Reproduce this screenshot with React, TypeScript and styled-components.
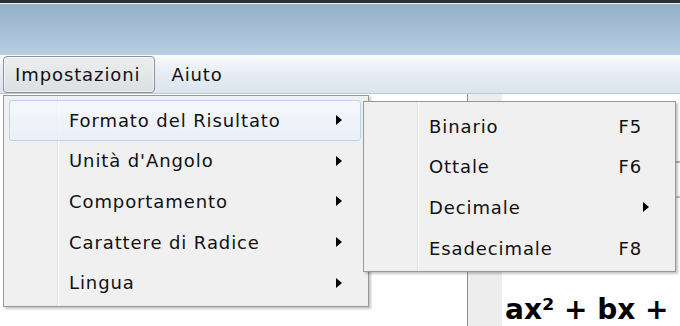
import React from 'react';
import styled, { createGlobalStyle } from 'styled-components';

const GlobalStyle = createGlobalStyle`
  html, body {
    margin: 0;
    padding: 0;
    background: #ffffff;
    overflow: hidden;
  }
`;

const Window = styled.div`
  position: relative;
  width: 680px;
  height: 326px;
  overflow: hidden;
  display: flex;
  flex-direction: column;
  font-family: 'DejaVu Sans', Tahoma, sans-serif;
  color: #111;
`;

const TopEdge = styled.div`
  height: 3px;
  background: #2c2e30;
  border-bottom: 1px solid #eef2f5;
`;

const TitleBar = styled.div`
  height: 52px;
  background: linear-gradient(to bottom, #94afc8 0%, #a6bfd7 50%, #b6cee4 100%);
`;

const MenuBar = styled.div`
  height: 40px;
  display: flex;
  align-items: flex-start;
  gap: 4px;
  padding: 1px 0 0 3px;
  box-sizing: border-box;
  background: linear-gradient(to bottom, #fdfeff 0%, #f1f5f9 18%, #e3eaf2 60%, #dbe4ee 100%);
  border-bottom: 1px solid #bcc8d5;
`;

const BarItem = styled.div<{ $open?: boolean }>`
  height: 37px;
  display: flex;
  align-items: center;
  padding: 0 14px 0 11px;
  box-sizing: border-box;
  font-size: 18px;
  letter-spacing: 0.9px;
  border: 1px solid ${(p) => (p.$open ? '#8f9296' : 'transparent')};
  border-radius: 4px;
  background: ${(p) =>
    p.$open
      ? 'linear-gradient(to bottom, #eceeef 0%, #e4e6e8 50%, #dcdfe2 100%)'
      : 'transparent'};
  box-shadow: ${(p) => (p.$open ? 'inset 0 0 0 1px rgba(255,255,255,0.55)' : 'none')};
`;

const Content = styled.div`
  flex: 1;
  display: flex;
  background: #ffffff;
`;

const Blank = styled.div`
  width: 467px;
`;

const Panel = styled.div`
  flex: 1;
  display: flex;
  border-left: 1px solid #8d8d8d;
`;

const Strip = styled.div`
  width: 34px;
  background: #ededed;
`;

const Sheet = styled.div`
  flex: 1;
  display: flex;
  flex-direction: column;
  padding-top: 67px;
  overflow: hidden;
`;

const InputBox = styled.div`
  height: 33px;
  border-top: 2px solid #b7b7b7;
  border-bottom: 2px solid #c4c4c4;
`;

const Formula = styled.div`
  margin-top: 96px;
  padding-left: 3px;
  font-weight: bold;
  font-size: 28px;
  line-height: 32px;
  white-space: nowrap;
  color: #000;
`;

const Menu = styled.div<{ $left: number; $top: number; $width: number }>`
  position: absolute;
  left: ${(p) => p.$left}px;
  top: ${(p) => p.$top}px;
  width: ${(p) => p.$width}px;
  box-sizing: border-box;
  padding: 4px 7px 3px 5px;
  border: 1px solid #979797;
  background:
    linear-gradient(
      to right,
      transparent 53px,
      #e0e1e1 53px,
      #e0e1e1 54px,
      #ffffff 54px,
      #ffffff 55px,
      transparent 55px
    ),
    #f0f0f0;
  box-shadow: 2px 2px 2px rgba(0, 0, 0, 0.22);
`;

const Item = styled.div<{ $hot?: boolean }>`
  height: 40.6px;
  display: flex;
  align-items: center;
  box-sizing: border-box;
  padding: 0 18px 0 59px;
  font-size: 18px;
  letter-spacing: 0.9px;
  border: 1px solid ${(p) => (p.$hot ? '#b8d2ef' : 'transparent')};
  border-radius: 3px;
  background: ${(p) =>
    p.$hot
      ? 'linear-gradient(to bottom, rgba(246,249,253,0.8) 0%, rgba(233,240,250,0.8) 100%)'
      : 'transparent'};
`;

const Label = styled.span`
  flex: 1;
  white-space: nowrap;
`;

const Shortcut = styled.span`
  margin-right: 7px;
`;

const Arrow = styled.span`
  width: 0;
  height: 0;
  border-top: 5px solid transparent;
  border-bottom: 5px solid transparent;
  border-left: 6px solid #000;
`;

type Entry = { label: string; key?: string; sub?: boolean; hot?: boolean };

const mainItems: Entry[] = [
  { label: 'Formato del Risultato', sub: true, hot: true },
  { label: "Unità d'Angolo", sub: true },
  { label: 'Comportamento', sub: true },
  { label: 'Carattere di Radice', sub: true },
  { label: 'Lingua', sub: true },
];

const formatItems: Entry[] = [
  { label: 'Binario', key: 'F5' },
  { label: 'Ottale', key: 'F6' },
  { label: 'Decimale', sub: true },
  { label: 'Esadecimale', key: 'F8' },
];

const renderItems = (items: Entry[]) =>
  items.map((it) => (
    <Item key={it.label} $hot={it.hot}>
      <Label>{it.label}</Label>
      {it.key && <Shortcut>{it.key}</Shortcut>}
      {it.sub && <Arrow />}
    </Item>
  ));

const App: React.FC = () => {
  return (
    <Window>
      <GlobalStyle />
      <TopEdge />
      <TitleBar />
      <MenuBar>
        <BarItem $open>Impostazioni</BarItem>
        <BarItem>Aiuto</BarItem>
      </MenuBar>
      <Content>
        <Blank />
        <Panel>
          <Strip />
          <Sheet>
            <InputBox />
            <Formula>ax² + bx +</Formula>
          </Sheet>
        </Panel>
      </Content>

      <Menu $left={3} $top={95} $width={366}>
        {renderItems(mainItems)}
      </Menu>
      <Menu $left={363} $top={101} $width={313}>
        {renderItems(formatItems)}
      </Menu>
    </Window>
  );
};

export default App;
